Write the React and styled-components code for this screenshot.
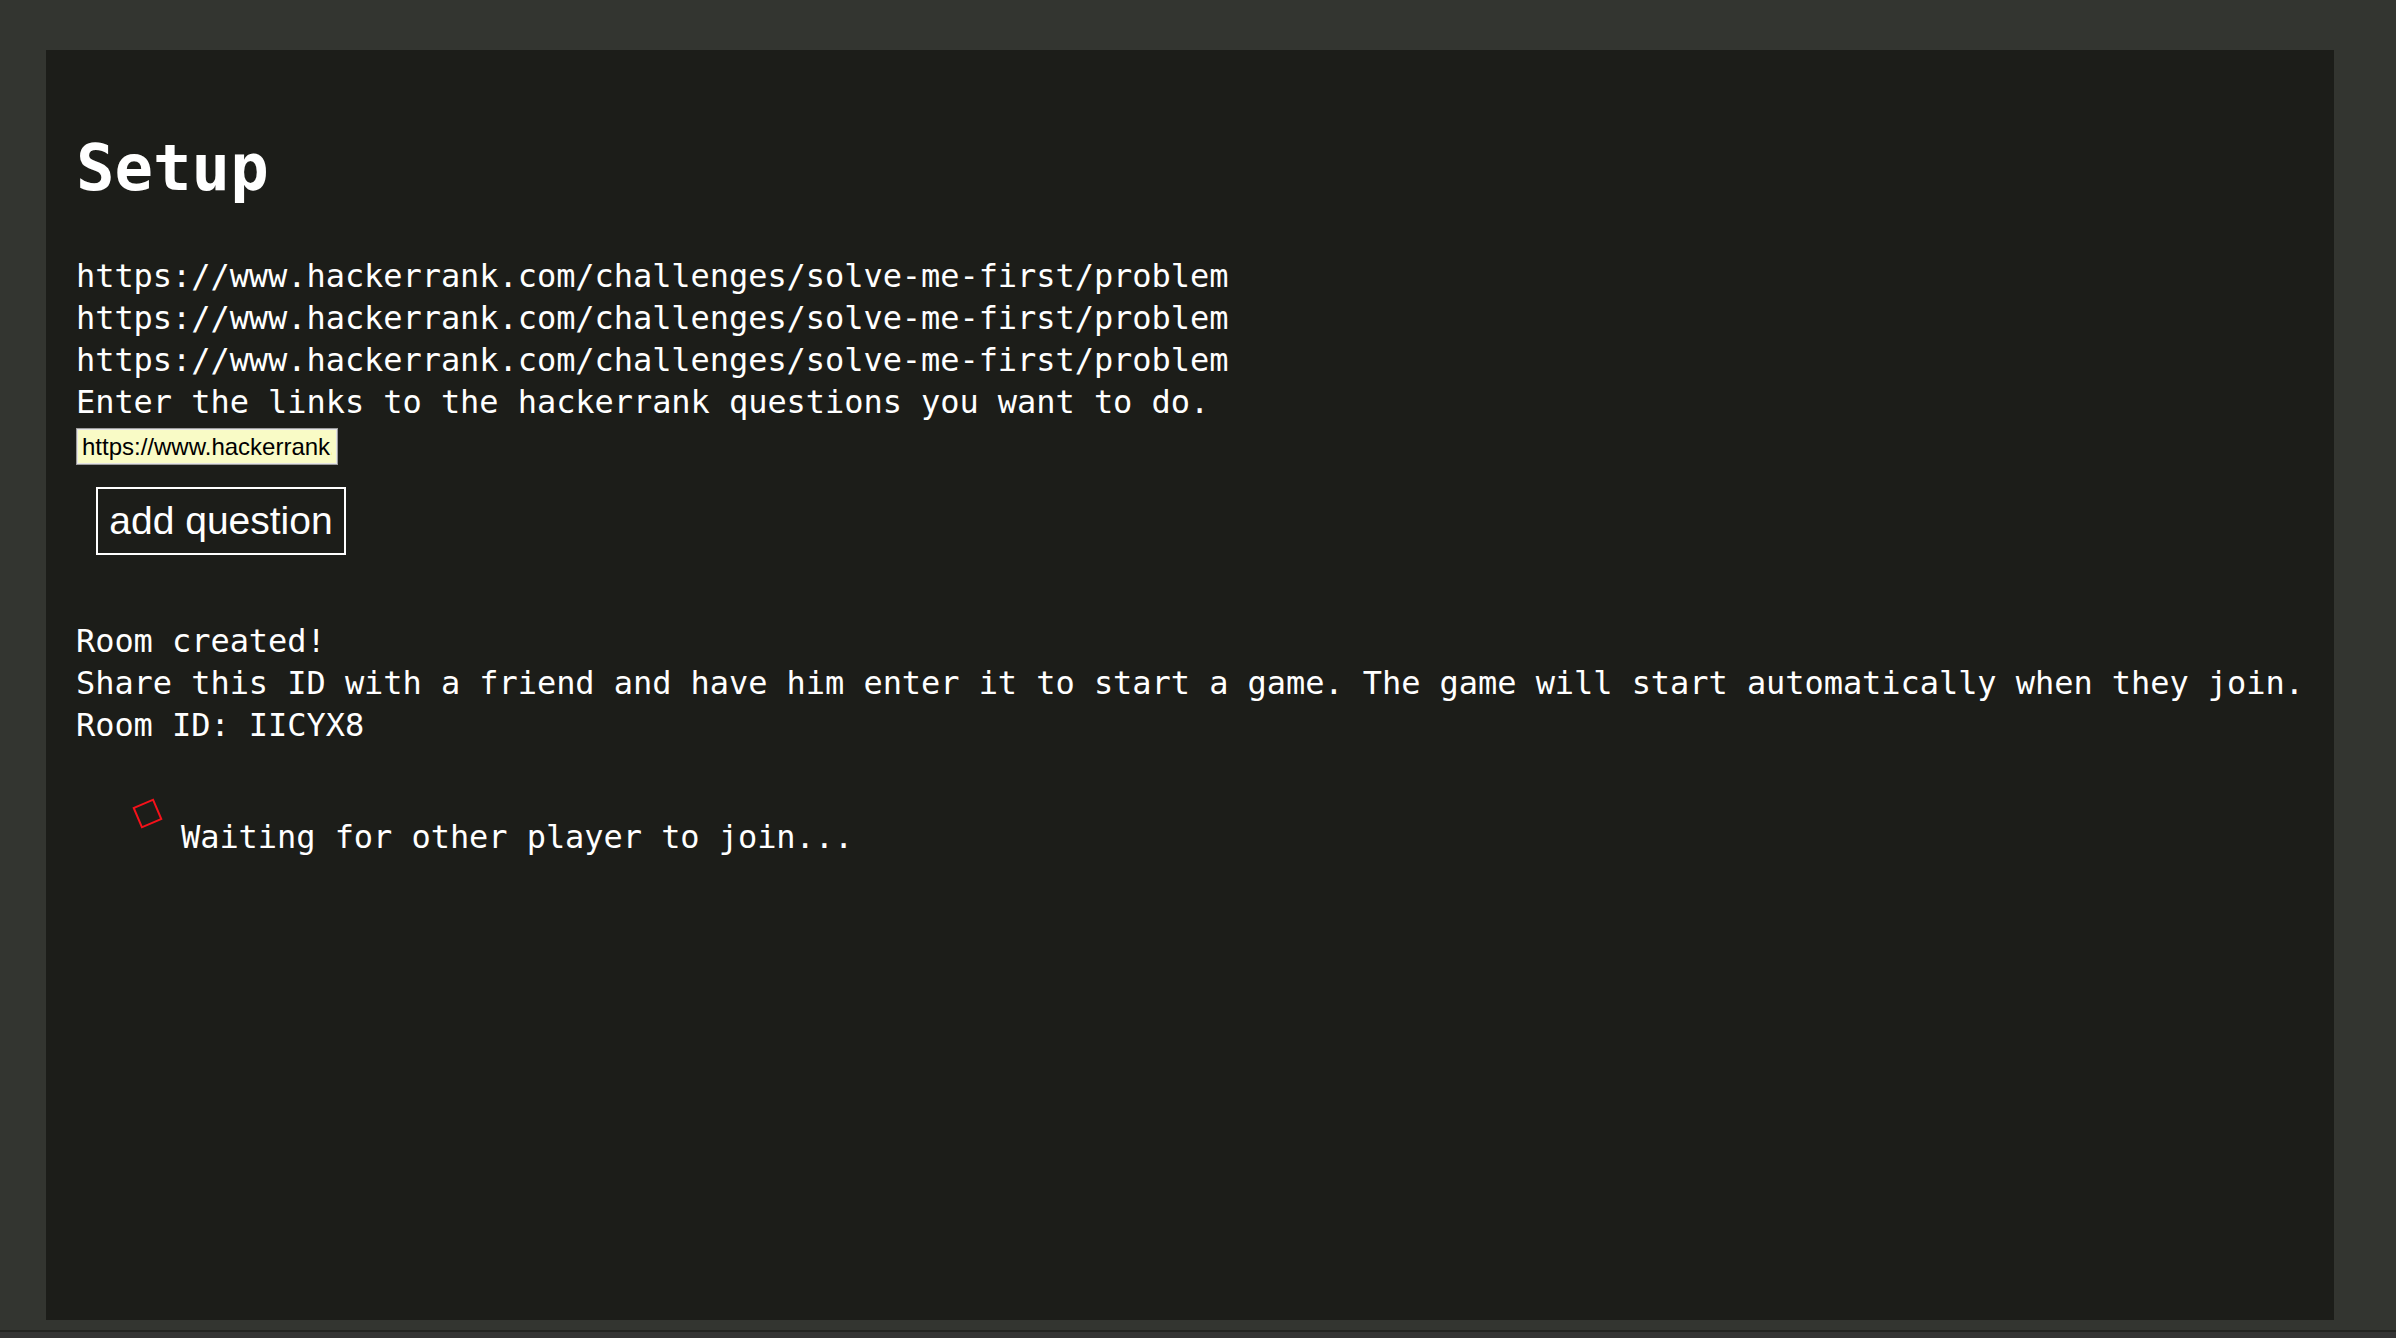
import React from 'react';
import styled, { createGlobalStyle } from 'styled-components';

const GlobalStyle = createGlobalStyle`
  html, body {
    margin: 0;
    padding: 0;
    background: #333530;
  }
  body {
    font-family: 'DejaVu Sans Mono', 'Liberation Mono', monospace;
  }
`;

const Page = styled.div`
  width: 2396px;
  height: 1338px;
  box-sizing: border-box;
  display: flex;
  flex-direction: column;
  background: #333530;
  overflow: hidden;
`;

const Frame = styled.div`
  padding: 50px 62px 10px 46px;
`;

const BottomBar = styled.div`
  height: 8px;
  border-top: 2px solid #232421;
  background: #343434;
`;

const Panel = styled.main`
  height: 1270px;
  box-sizing: border-box;
  background: #1c1d19;
  color: #ffffff;
  padding: 74px 30px 0;
`;

const Title = styled.h1`
  margin: 0 0 43px;
  font-size: 64px;
  line-height: 88px;
  font-weight: bold;
`;

const Line = styled.div`
  font-size: 32px;
  line-height: 42px;
  letter-spacing: -0.06px;
  white-space: pre;
`;

const UrlInput = styled.input`
  display: block;
  margin-top: 5px;
  width: 262px;
  height: 37px;
  box-sizing: border-box;
  padding: 0 5px;
  border: 1px solid #9c9c9c;
  box-shadow: inset 0 0 0 1px #e4e4e4;
  background: #f9fbc6;
  color: #000;
  font-family: 'Liberation Sans', Arial, sans-serif;
  font-size: 24px;
  outline: none;
`;

const AddButton = styled.button`
  display: block;
  margin: 22px 0 0 20px;
  width: 250px;
  height: 68px;
  box-sizing: border-box;
  border: 2px solid #ffffff;
  background: transparent;
  color: #ffffff;
  font-family: 'Liberation Sans', Arial, sans-serif;
  font-size: 39px;
  padding: 0;
`;

const RoomInfo = styled.section`
  margin-top: 65px;
`;

const Waiting = styled.div`
  margin-top: 56px;
  padding-left: 60px;
  display: flex;
  align-items: flex-start;
  gap: 22px;
`;

const Spinner = styled.div`
  width: 23px;
  height: 23px;
  margin-top: 0;
  border: 2.5px solid #f5111a;
  box-sizing: border-box;
  transform: rotate(-23deg);
  flex: none;
`;

const WaitText = styled(Line)`
  padding-top: 14px;
`;

const links = [
  'https://www.hackerrank.com/challenges/solve-me-first/problem',
  'https://www.hackerrank.com/challenges/solve-me-first/problem',
  'https://www.hackerrank.com/challenges/solve-me-first/problem',
];

const App = () => {
  return (
    <Page>
      <GlobalStyle />
      <Frame>
        <Panel>
          <Title>Setup</Title>
          {links.map((l, i) => (
            <Line key={i}>{l}</Line>
          ))}
          <Line>Enter the links to the hackerrank questions you want to do.</Line>
          <UrlInput
            defaultValue="https://www.hackerrank.com/challenges/solve-me-first/problem"
            readOnly
          />
          <AddButton>add question</AddButton>
          <RoomInfo>
            <Line>Room created!</Line>
            <Line>
              Share this ID with a friend and have him enter it to start a game. The game will start automatically when they join.
            </Line>
            <Line>Room ID: IICYX8</Line>
          </RoomInfo>
          <Waiting>
            <Spinner />
            <WaitText>Waiting for other player to join...</WaitText>
          </Waiting>
        </Panel>
      </Frame>
      <BottomBar />
    </Page>
  );
};

export default App;
